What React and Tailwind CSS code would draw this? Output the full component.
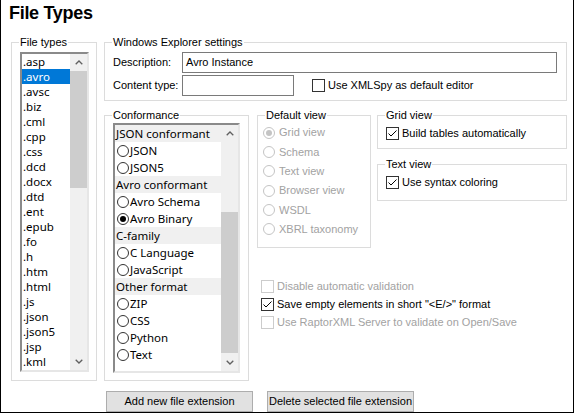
import React from 'react';

const fileTypes = [
  '.asp', '.avro', '.avsc', '.biz', '.cml', '.cpp', '.css', '.dcd', '.docx', '.dtd', '.ent',
  '.epub', '.fo', '.h', '.htm', '.html', '.js', '.json', '.json5', '.jsp', '.kml',
];

const conformance = [
  { label: 'JSON conformant', header: true },
  { label: 'JSON' },
  { label: 'JSON5' },
  { label: 'Avro conformant', header: true },
  { label: 'Avro Schema' },
  { label: 'Avro Binary', checked: true },
  { label: 'C-family', header: true },
  { label: 'C Language' },
  { label: 'JavaScript' },
  { label: 'Other format', header: true },
  { label: 'ZIP' },
  { label: 'CSS' },
  { label: 'Python' },
  { label: 'Text' },
];

const views = ['Grid view', 'Schema', 'Text view', 'Browser view', 'WSDL', 'XBRL taxonomy'];

// small chevron used on the scrollbar buttons
function Chevron({ down }) {
  return (
    <svg width="8" height="5" viewBox="0 0 8 5">
      <path
        d={down ? 'M0.7 0.7 L4 4 L7.3 0.7' : 'M0.7 4.3 L4 1 L7.3 4.3'}
        stroke="#606060"
        strokeWidth="1.3"
        fill="none"
      />
    </svg>
  );
}

function Scrollbar({ thumbTop, thumbHeight }) {
  return (
    <div className="w-[17px] flex flex-col bg-[#f0f0f0] shrink-0">
      <div className="h-[17px] flex items-center justify-center">
        <Chevron />
      </div>
      <div className="flex-1 flex flex-col">
        <div style={{ height: thumbTop }} />
        <div className="bg-[#cdcdcd]" style={{ height: thumbHeight }} />
      </div>
      <div className="h-[17px] flex items-center justify-center">
        <Chevron down />
      </div>
    </div>
  );
}

// group box: padding goes on the inner wrapper so the legend keeps its own offset
function Group({ title, className, inner, children }) {
  return (
    <fieldset className={`border border-[#dcdcdc] ${className}`}>
      <legend className="ml-[7px] px-[1px] text-[11px] leading-[14px] text-black">{title}</legend>
      <div className={inner}>{children}</div>
    </fieldset>
  );
}

function Checkbox({ checked, disabled }) {
  return (
    <span
      className={`w-[13px] h-[13px] border bg-white shrink-0 flex items-center justify-center ${
        disabled ? 'border-[#cccccc]' : 'border-[#333333]'
      }`}
    >
      {checked && (
        <svg width="11" height="11" viewBox="0 0 11 11">
          <path d="M1.5 5.5 L4 8 L9.5 2.5" stroke="#000" strokeWidth="1" fill="none" />
        </svg>
      )}
    </span>
  );
}

function Radio({ checked, disabled }) {
  return (
    <span
      className={`w-[12px] h-[12px] rounded-full border shrink-0 flex items-center justify-center ${
        disabled ? 'border-[#c4c4c4] bg-white' : 'border-[#333333] bg-white'
      }`}
    >
      {checked && (
        <span className={`w-[6px] h-[6px] rounded-full ${disabled ? 'bg-[#c4c4c4]' : 'bg-black'}`} />
      )}
    </span>
  );
}

function CheckRow({ label, checked, disabled, className }) {
  return (
    <div className={`flex items-center gap-[3px] text-[11px] ${disabled ? 'text-[#a2a2a2]' : 'text-black'} ${className}`}>
      <Checkbox checked={checked} disabled={disabled} />
      <span>{label}</span>
    </div>
  );
}

const sunken =
  'border-2 border-t-[#8a8a8a] border-l-[#8a8a8a] border-r-[#e6e6e6] border-b-[#e6e6e6]';

export default function App() {
  return (
    <div className="w-[574px] h-[415px] bg-white text-black font-['Liberation_Sans',Arial,sans-serif]">
      <div className="h-[413px] border-x border-b border-black flex flex-col">
        <h1 className="h-[35px] pt-[3px] pl-[8px] text-[18px] leading-[21px] font-bold tracking-[-0.3px]">
          File Types
        </h1>

        <div className="flex pl-[10px]">
          {/* left: list of file extensions */}
          <Group title="File types" className="w-[86px] h-[346px]" inner="pl-[8px]">
            <div className={`mt-[3px] w-[69px] h-[320px] flex bg-white ${sunken}`}>
              <div className="flex-1 font-['Noto_Sans',sans-serif] text-[11.5px]">
                {fileTypes.map((ft) => (
                  <div
                    key={ft}
                    className={`h-[15px] leading-[15px] pl-[1px] ${
                      ft === '.avro' ? 'bg-[#0078d7] text-white' : ''
                    }`}
                  >
                    {ft}
                  </div>
                ))}
              </div>
              <Scrollbar thumbTop={0} thumbHeight={117} />
            </div>
          </Group>

          <div className="ml-[7px] w-[463px] flex flex-col">
            <Group title="Windows Explorer settings" className="h-[66px] text-[11px]" inner="pl-[8px] pr-[9px]">
              <div className="flex items-center mt-[3px]">
                <span className="w-[69px]">Description:</span>
                <div className="flex-1 h-[21px] border border-[#7a7a7a] px-[3px] leading-[19px]">
                  Avro Instance
                </div>
              </div>
              <div className="flex items-center mt-[2px]">
                <span className="w-[69px]">Content type:</span>
                <div className="w-[112px] h-[21px] border border-[#7a7a7a]" />
                <CheckRow label="Use XMLSpy as default editor" className="ml-[18px]" />
              </div>
            </Group>

            <div className="flex mt-[7px]">
              <Group title="Conformance" className="w-[145px] h-[273px]" inner="pl-[8px]">
                <div className={`mt-[1px] w-[127px] h-[250px] flex bg-white ${sunken}`}>
                  <div className="flex-1 font-['Noto_Sans',sans-serif] text-[11.5px]">
                    {conformance.map((c) =>
                      c.header ? (
                        <div key={c.label} className="h-[17px] leading-[17px] bg-[#f0f0f0] pl-[1px]">
                          {c.label}
                        </div>
                      ) : (
                        <div key={c.label} className="h-[17px] flex items-center gap-[1px] pl-[2px]">
                          <Radio checked={c.checked} />
                          <span>{c.label}</span>
                        </div>
                      )
                    )}
                  </div>
                  <Scrollbar thumbTop={70} thumbHeight={141} />
                </div>
              </Group>

              <div className="ml-[8px] flex flex-col">
                <div className="flex">
                  <Group title="Default view" className="w-[114px] h-[140px]" inner="pl-[5px] mt-[1px] text-[#a2a2a2]">
                    {views.map((v, i) => (
                      <div key={v} className="h-[19.3px] flex items-center gap-[4px] text-[11px]">
                        <Radio checked={i === 0} disabled />
                        <span>{v}</span>
                      </div>
                    ))}
                  </Group>

                  <div className="ml-[6px] w-[190px] flex flex-col">
                    <Group title="Grid view" className="h-[41px]" inner="pl-[8px]">
                      <CheckRow label="Build tables automatically" checked className="h-[20px] mt-[1px]" />
                    </Group>
                    <Group title="Text view" className="h-[44px] mt-[8px]" inner="pl-[8px]">
                      <CheckRow label="Use syntax coloring" checked className="h-[20px] mt-[1px]" />
                    </Group>
                  </div>
                </div>

                <div className="mt-[29px] pl-[4px]">
                  <CheckRow label="Disable automatic validation" disabled className="h-[18px]" />
                  <CheckRow label={'Save empty elements in short "<E/>" format'} checked className="h-[18px]" />
                  <CheckRow label="Use RaptorXML Server to validate on Open/Save" disabled className="h-[18px]" />
                </div>
              </div>
            </div>
          </div>
        </div>

        <div className="flex pl-[105px] mt-[10px] gap-[14px] text-[11px]">
          <button className="w-[147px] h-[21px] bg-[#e1e1e1] border border-[#adadad]">
            Add new file extension
          </button>
          <button className="w-[147px] h-[21px] bg-[#e1e1e1] border border-[#adadad]">
            Delete selected file extension
          </button>
        </div>
      </div>
    </div>
  );
}
